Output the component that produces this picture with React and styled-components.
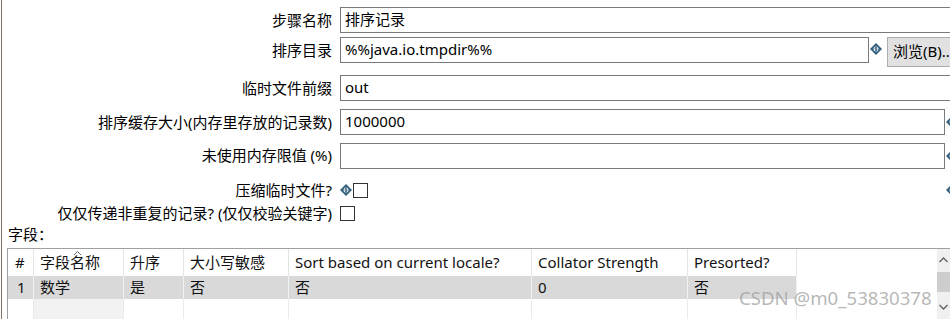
import styled, { createGlobalStyle } from "styled-components";

const Global = createGlobalStyle`
    html, body {
        margin: 0;
        padding: 0;
        background: #ffffff;
        overflow: hidden;
    }
    body {
        font-family: "Segoe UI", "Noto Sans", "Noto Sans CJK SC", sans-serif;
        font-size: 15px;
        color: #000;
    }
`

const Frame = styled.div`
    position: relative;
    width: 949px;
    height: 319px;
    margin-left: 1px;
    border-left: 1px solid #7d7064;
    overflow: hidden;
    padding-top: 7px;
    box-sizing: border-box;
`

const Row = styled.div`
    display: grid;
    grid-template-columns: 330px auto;
    column-gap: 8px;
    align-items: ${p => p.$align || 'center'};
    margin-top: ${p => p.$mt || 0}px;
    height: ${p => p.$h || 26}px;
`

const Label = styled.div`
    text-align: right;
    white-space: nowrap;
    line-height: 20px;
    margin-top: ${p => p.$shift || 0}px;
`

const Field = styled.div`
    display: flex;
    align-items: ${p => p.$align || 'center'};
`

const Input = styled.div`
    box-sizing: border-box;
    width: ${p => p.$w}px;
    height: 26px;
    border: 1px solid #7a7a7a;
    background: #fff;
    padding-left: 4px;
    line-height: 23px;
    white-space: nowrap;
    flex-shrink: 0;
`

const Button = styled.div`
    box-sizing: border-box;
    height: 30px;
    width: 90px;
    margin-left: 5px;
    background: #e1e1e1;
    border: 1px solid #adadad;
    padding-left: 5px;
    line-height: 27px;
    white-space: nowrap;
    flex-shrink: 0;
`

const Check = styled.div`
    box-sizing: border-box;
    width: 15px;
    height: 15px;
    border: 1px solid #333;
    background: #fff;
    flex-shrink: 0;
`

const VarIcon = styled.svg`
    width: 12px;
    height: 12px;
    flex-shrink: 0;
    margin: ${p => p.$m || '0'};
`

const Section = styled.div`
    margin: 6px 0 0 6px;
    height: 20px;
    line-height: 20px;
`

const Table = styled.div`
    display: flex;
    margin: 4px 0 0 5px;
    border-top: 1px solid #a0a0a0;
    border-left: 1px solid #a0a0a0;
    height: 80px;
`

const Grid = styled.div`
    flex: 1;
    display: flex;
    flex-direction: column;
`

const TRow = styled.div`
    display: flex;
    height: ${p => p.$h}px;
`

const Cell = styled.div`
    position: relative;
    box-sizing: border-box;
    width: ${p => p.$w ? p.$w + 'px' : 'auto'};
    flex: ${p => p.$w ? '0 0 auto' : '1'};
    padding-left: ${p => p.$pl ?? 6}px;
    line-height: ${p => p.$lh}px;
    background: ${p => p.$bg || '#fff'};
    border-right: ${p => p.$noline ? 'none' : `1px solid ${p.$line || '#e2e7ee'}`};
    white-space: nowrap;
    overflow: hidden;
    color: #111;
`

const SortCaret = styled.svg`
    position: absolute;
    left: 39px;
    top: 1px;
    width: 9px;
    height: 6px;
`

const Scrollbar = styled.div`
    width: 13px;
    background: #f0f0f0;
    display: flex;
    flex-direction: column;
    align-items: center;
`

const Thumb = styled.div`
    width: 100%;
    height: 20px;
    margin-top: 9px;
    background: #cdcdcd;
`

const Arrow = styled.svg`
    width: 9px;
    height: 6px;
    margin-top: ${p => p.$mt}px;
`

const Watermark = styled.div`
    position: absolute;
    left: 737px;
    top: 285px;
    font-family: "Noto Sans", "Segoe UI", sans-serif;
    font-size: 18.6px;
    color: rgba(160, 160, 160, 0.75);
    white-space: nowrap;
`

const Diamond = ({ m }) => (
    <VarIcon viewBox="0 0 12 12" $m={m}>
        <polygon points="6,0 12,6 6,12 0,6" fill="#35607f" />
        <circle cx="6" cy="6" r="2.5" fill="#dfe8ef" />
        <path d="M7 5 C6.7 4.5 5.1 4.5 5.1 5.4 C5.1 6.1 7 5.9 7 6.8 C7 7.6 5.3 7.6 5 7.1 M6 4 V8" stroke="#2a5070" strokeWidth="0.8" fill="none" />
    </VarIcon>
)

const columns = [
    { title: '#', w: 26, pl: 7 },
    { title: '字段名称', w: 90 },
    { title: '升序', w: 60 },
    { title: '大小写敏感', w: 105 },
    { title: 'Sort based on current locale?', w: 243 },
    { title: 'Collator Strength', w: 156 },
    { title: 'Presorted?', w: 109 },
]

const data = ['1', '数学', '是', '否', '否', '0', '否']

const App = () => {
    return <>
        <Global />
        <Frame>
            <Row>
                <Label>步骤名称</Label>
                <Field><Input $w={640}>排序记录</Input></Field>
            </Row>
            <Row $mt={4} $h={30} $align="start">
                <Label $shift={3}>排序目录</Label>
                <Field $align="start">
                    <Input $w={529}>%%java.io.tmpdir%%</Input>
                    <Diamond m="6px 0 0 1px" />
                    <Button>浏览(B)..</Button>
                </Field>
            </Row>
            <Row $mt={8}>
                <Label>临时文件前缀</Label>
                <Field><Input $w={640}>out</Input></Field>
            </Row>
            <Row $mt={8}>
                <Label>排序缓存大小(内存里存放的记录数)</Label>
                <Field>
                    <Input $w={605}>1000000</Input>
                    <Diamond m="0 0 0 1px" />
                </Field>
            </Row>
            <Row $mt={8}>
                <Label $shift={-3}>未使用内存限值 (%)</Label>
                <Field>
                    <Input $w={605}></Input>
                    <Diamond m="0 0 0 1px" />
                </Field>
            </Row>
            <Row $mt={11} $h={15}>
                <Label>压缩临时文件?</Label>
                <Field>
                    <Diamond m="0 1px 0 0" />
                    <Check />
                    <Diamond m="0 0 0 578px" />
                </Field>
            </Row>
            <Row $mt={8} $h={15}>
                <Label>仅仅传递非重复的记录? (仅仅校验关键字)</Label>
                <Field><Check /></Field>
            </Row>
            <Section>字段：</Section>
            <Table>
                <Grid>
                    <TRow $h={27}>
                        {columns.map((c, i) => (
                            <Cell key={i} $w={c.w} $pl={c.pl} $lh={27} $line="#e4e4e4">
                                {i === 1 && (
                                    <SortCaret viewBox="0 0 9 6">
                                        <path d="M1 5 L4.5 1.5 L8 5" stroke="#666" strokeWidth="1" fill="none" />
                                    </SortCaret>
                                )}
                                {c.title}
                            </Cell>
                        ))}
                        <Cell $lh={27} $noline />
                    </TRow>
                    <TRow $h={23}>
                        {data.map((v, i) => (
                            <Cell key={i} $w={columns[i].w} $pl={i === 0 ? 9 : 6} $lh={23} $bg="#d9d9d9" $line="#eef1f5">
                                {v}
                            </Cell>
                        ))}
                        <Cell $lh={23} $noline />
                    </TRow>
                    <TRow $h={30}>
                        {columns.map((c, i) => (
                            <Cell key={i} $w={c.w} $lh={23} $bg={i === 1 ? '#f2f2f2' : '#fff'} $line="#e6ebf2" />
                        ))}
                        <Cell $lh={23} $noline />
                    </TRow>
                </Grid>
                <Scrollbar>
                    <Arrow viewBox="0 0 9 6" $mt={8}>
                        <path d="M0.5 5 L4.5 1 L8.5 5" stroke="#606060" strokeWidth="1.3" fill="none" />
                    </Arrow>
                    <Thumb />
                    <Arrow viewBox="0 0 9 6" $mt={12}>
                        <path d="M0.5 1 L4.5 5 L8.5 1" stroke="#606060" strokeWidth="1.3" fill="none" />
                    </Arrow>
                </Scrollbar>
            </Table>
            <Watermark>CSDN @m0_53830378</Watermark>
        </Frame>
    </>
};

export default App
